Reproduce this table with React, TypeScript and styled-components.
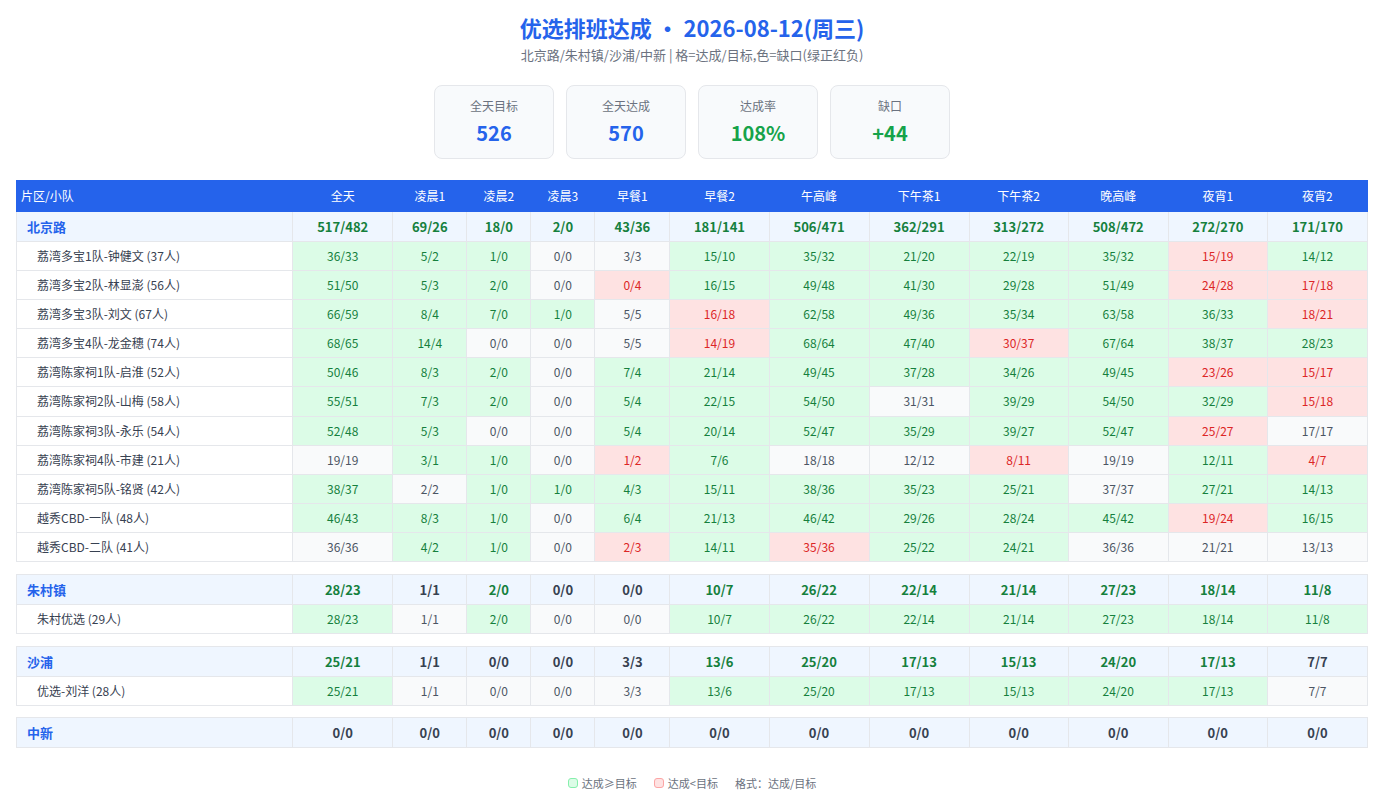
import React from "react";
import styled, { createGlobalStyle } from "styled-components";

const GlobalStyle = createGlobalStyle`
  html, body { margin: 0; padding: 0; background: #ffffff; }
  body { font-family: "Noto Sans CJK SC", "Noto Sans", sans-serif; color: #374151; }
  * { box-sizing: border-box; }
`;

const Page = styled.div`
  padding: 12px 16px 16px;
`;

const Title = styled.h1`
  margin: 0;
  text-align: center;
  font-size: 22px;
  line-height: 30px;
  font-weight: 700;
  color: #2563eb;
`;

const Subtitle = styled.div`
  margin-top: 4px;
  text-align: center;
  font-size: 13px;
  line-height: 18px;
  color: #6b7280;
`;

const Cards = styled.div`
  display: flex;
  justify-content: center;
  gap: 12px;
  margin-top: 21px;
`;

const Card = styled.div`
  width: 120px;
  height: 74px;
  padding: 11px 8px 0;
  border: 1px solid #e5e7eb;
  border-radius: 8px;
  background: #f8fafc;
  text-align: center;
`;

const CardLabel = styled.div`
  font-size: 12px;
  line-height: 18px;
  color: #6b7280;
`;

const CardValue = styled.div<{ $tone: "blue" | "green" }>`
  margin-top: 4px;
  font-size: 20px;
  line-height: 28px;
  font-weight: 700;
  color: ${(p) => (p.$tone === "blue" ? "#2563eb" : "#16a34a")};
`;

const Table = styled.table`
  margin-top: 21px;
  width: 100%;
  border-collapse: collapse;
  table-layout: fixed;
  font-size: 12px;
`;

const HeadCell = styled.th<{ $first?: boolean }>`
  background: #2563eb;
  color: #ffffff;
  font-weight: 400;
  font-size: 12px;
  line-height: 14px;
  padding: 8px 4px;
  border: 1px solid #2563eb;
  text-align: ${(p) => (p.$first ? "left" : "center")};
`;

const GroupName = styled.td`
  background: #eff6ff;
  color: #2563eb;
  font-weight: 700;
  font-size: 13px;
  line-height: 15px;
  padding: 7px 10px;
  border: 1px solid #e5e7eb;
`;

const GroupValue = styled.td<{ $tone: Tone }>`
  background: #eff6ff;
  color: ${(p) => (p.$tone === "up" ? "#15803d" : p.$tone === "down" ? "#dc2626" : "#374151")};
  font-weight: 700;
  font-size: 13px;
  line-height: 15px;
  padding: 7px 4px;
  text-align: center;
  border: 1px solid #e5e7eb;
`;

const TeamName = styled.td`
  background: #ffffff;
  color: #374151;
  font-size: 12px;
  line-height: 14.1px;
  padding: 7px 4px 7px 20px;
  border: 1px solid #e5e7eb;
  white-space: nowrap;
`;

const ValueCell = styled.td<{ $tone: Tone }>`
  background: ${(p) => (p.$tone === "up" ? "#dcfce7" : p.$tone === "down" ? "#fee2e2" : "#f9fafb")};
  color: ${(p) => (p.$tone === "up" ? "#15803d" : p.$tone === "down" ? "#dc2626" : "#4b5563")};
  font-size: 12px;
  line-height: 14.1px;
  padding: 7px 4px;
  text-align: center;
  border: 1px solid #e5e7eb;
`;

const SpacerCell = styled.td`
  height: 12.7px;
  padding: 0;
  border: none;
  background: #ffffff;
`;

const Legend = styled.div`
  margin-top: 26px;
  display: flex;
  justify-content: center;
  align-items: center;
  gap: 17px;
  font-size: 11px;
  line-height: 18px;
  color: #6b7280;
`;

const LegendItem = styled.span`
  display: inline-flex;
  align-items: center;
  gap: 4px;
`;

const Swatch = styled.span<{ $tone: "up" | "down" }>`
  display: inline-block;
  width: 10px;
  height: 10px;
  border-radius: 3px;
  background: ${(p) => (p.$tone === "up" ? "#dcfce7" : "#fee2e2")};
  border: 1px solid ${(p) => (p.$tone === "up" ? "#86efac" : "#fca5a5")};
`;

type Tone = "up" | "down" | "even";

const columns = ["全天", "凌晨1", "凌晨2", "凌晨3", "早餐1", "早餐2", "午高峰", "下午茶1", "下午茶2", "晚高峰", "夜宵1", "夜宵2"];
const widths = [276, 100, 74, 64, 64, 75, 99, 100, 100, 99, 100, 99, 100];

interface Team { name: string; values: string[] }
interface Group { name: string; values: string[]; teams: Team[] }

const split = (s: string) => s.split(" ");

const groups: Group[] = [
  {
    name: "北京路",
    values: split("517/482 69/26 18/0 2/0 43/36 181/141 506/471 362/291 313/272 508/472 272/270 171/170"),
    teams: [
      { name: "荔湾多宝1队-钟健文 (37人)", values: split("36/33 5/2 1/0 0/0 3/3 15/10 35/32 21/20 22/19 35/32 15/19 14/12") },
      { name: "荔湾多宝2队-林显澎 (56人)", values: split("51/50 5/3 2/0 0/0 0/4 16/15 49/48 41/30 29/28 51/49 24/28 17/18") },
      { name: "荔湾多宝3队-刘文 (67人)", values: split("66/59 8/4 7/0 1/0 5/5 16/18 62/58 49/36 35/34 63/58 36/33 18/21") },
      { name: "荔湾多宝4队-龙金穗 (74人)", values: split("68/65 14/4 0/0 0/0 5/5 14/19 68/64 47/40 30/37 67/64 38/37 28/23") },
      { name: "荔湾陈家祠1队-启淮 (52人)", values: split("50/46 8/3 2/0 0/0 7/4 21/14 49/45 37/28 34/26 49/45 23/26 15/17") },
      { name: "荔湾陈家祠2队-山梅 (58人)", values: split("55/51 7/3 2/0 0/0 5/4 22/15 54/50 31/31 39/29 54/50 32/29 15/18") },
      { name: "荔湾陈家祠3队-永乐 (54人)", values: split("52/48 5/3 0/0 0/0 5/4 20/14 52/47 35/29 39/27 52/47 25/27 17/17") },
      { name: "荔湾陈家祠4队-市建 (21人)", values: split("19/19 3/1 1/0 0/0 1/2 7/6 18/18 12/12 8/11 19/19 12/11 4/7") },
      { name: "荔湾陈家祠5队-铭贤 (42人)", values: split("38/37 2/2 1/0 1/0 4/3 15/11 38/36 35/23 25/21 37/37 27/21 14/13") },
      { name: "越秀CBD-一队 (48人)", values: split("46/43 8/3 1/0 0/0 6/4 21/13 46/42 29/26 28/24 45/42 19/24 16/15") },
      { name: "越秀CBD-二队 (41人)", values: split("36/36 4/2 1/0 0/0 2/3 14/11 35/36 25/22 24/21 36/36 21/21 13/13") },
    ],
  },
  {
    name: "朱村镇",
    values: split("28/23 1/1 2/0 0/0 0/0 10/7 26/22 22/14 21/14 27/23 18/14 11/8"),
    teams: [{ name: "朱村优选 (29人)", values: split("28/23 1/1 2/0 0/0 0/0 10/7 26/22 22/14 21/14 27/23 18/14 11/8") }],
  },
  {
    name: "沙浦",
    values: split("25/21 1/1 0/0 0/0 3/3 13/6 25/20 17/13 15/13 24/20 17/13 7/7"),
    teams: [{ name: "优选-刘洋 (28人)", values: split("25/21 1/1 0/0 0/0 3/3 13/6 25/20 17/13 15/13 24/20 17/13 7/7") }],
  },
  {
    name: "中新",
    values: split("0/0 0/0 0/0 0/0 0/0 0/0 0/0 0/0 0/0 0/0 0/0 0/0"),
    teams: [],
  },
];

const toneOf = (v: string): Tone => {
  const [a, t] = v.split("/").map(Number);
  if (a > t) return "up";
  if (a < t) return "down";
  return "even";
};

const stats = [
  { label: "全天目标", value: "526", tone: "blue" as const },
  { label: "全天达成", value: "570", tone: "blue" as const },
  { label: "达成率", value: "108%", tone: "green" as const },
  { label: "缺口", value: "+44", tone: "green" as const },
];

export default function App() {
  return (
    <>
      <GlobalStyle />
      <Page>
        <Title>优选排班达成 · 2026-08-12(周三)</Title>
        <Subtitle>北京路/朱村镇/沙浦/中新 | 格=达成/目标,色=缺口(绿正红负)</Subtitle>
        <Cards>
          {stats.map((s) => (
            <Card key={s.label}>
              <CardLabel>{s.label}</CardLabel>
              <CardValue $tone={s.tone}>{s.value}</CardValue>
            </Card>
          ))}
        </Cards>
        <Table>
          <colgroup>
            {widths.map((w, i) => (
              <col key={i} style={{ width: w }} />
            ))}
          </colgroup>
          <thead>
            <tr>
              <HeadCell $first>片区/小队</HeadCell>
              {columns.map((c) => (
                <HeadCell key={c}>{c}</HeadCell>
              ))}
            </tr>
          </thead>
          {groups.map((g, gi) => (
            <tbody key={g.name}>
              {gi > 0 && (
                <tr>
                  <SpacerCell colSpan={13} />
                </tr>
              )}
              <tr>
                <GroupName>{g.name}</GroupName>
                {g.values.map((v, i) => (
                  <GroupValue key={i} $tone={toneOf(v)}>{v}</GroupValue>
                ))}
              </tr>
              {g.teams.map((t) => (
                <tr key={t.name}>
                  <TeamName>{t.name}</TeamName>
                  {t.values.map((v, i) => (
                    <ValueCell key={i} $tone={toneOf(v)}>{v}</ValueCell>
                  ))}
                </tr>
              ))}
            </tbody>
          ))}
        </Table>
        <Legend>
          <LegendItem><Swatch $tone="up" />达成≥目标</LegendItem>
          <LegendItem><Swatch $tone="down" />达成&lt;目标</LegendItem>
          <LegendItem>格式：达成/目标</LegendItem>
        </Legend>
      </Page>
    </>
  );
}
